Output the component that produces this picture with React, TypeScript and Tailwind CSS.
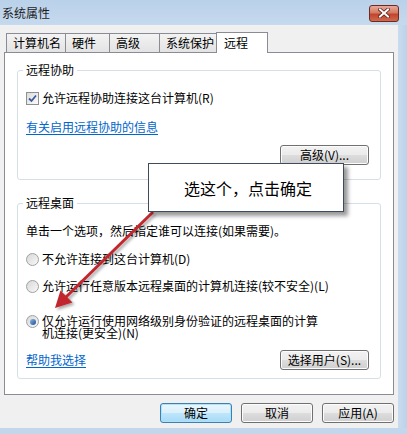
import React from "react";

const font = { fontFamily: '"Noto Sans CJK SC", "Noto Sans", sans-serif' };

function Checkbox() {
  return (
    <span className="flex h-[13px] w-[13px] shrink-0 items-center justify-center border border-[#8e8f8f] bg-gradient-to-br from-[#dcdcdc] to-[#fbfbfb]">
      <svg width="9" height="9" viewBox="0 0 9 9">
        <path d="M1 4.5 L3.5 7 L8 1.5" fill="none" stroke="#3c5a9a" strokeWidth="1.8" />
      </svg>
    </span>
  );
}

function Radio({ checked }: { checked?: boolean }) {
  return (
    <span className="flex h-[13px] w-[13px] shrink-0 items-center justify-center rounded-full border border-[#a0a0a0] bg-gradient-to-br from-[#d8d8d8] to-[#f8f8f8]">
      {checked && (
        <span className="h-[6px] w-[6px] rounded-full bg-gradient-to-br from-[#8fb8e6] to-[#1f4f93]" />
      )}
    </span>
  );
}

function WinButton({
  children,
  w,
  primary,
}: {
  children: React.ReactNode;
  w: string;
  primary?: boolean;
}) {
  return (
    <div
      className={
        "flex h-[20px] items-center justify-center rounded-[3px] border text-[12px] leading-none text-black " +
        w +
        (primary
          ? " border-[#3c7fb1] bg-[linear-gradient(#eaf6fd_0%,#d9f0fc_50%,#bee6fd_51%,#a7d9f5_100%)] shadow-[inset_0_0_0_1px_#aee2fa]"
          : " border-[#707070] bg-[linear-gradient(#f2f2f2_0%,#ebebeb_50%,#dddddd_51%,#cfcfcf_100%)] shadow-[inset_0_0_0_1px_#fcfcfc]")
      }
    >
      {children}
    </div>
  );
}

const tabs = [
  { label: "计算机名", w: "w-[60px]" },
  { label: "硬件", w: "w-[45px]" },
  { label: "高级", w: "w-[51px]" },
  { label: "系统保护", w: "w-[58px]" },
];

export default function App() {
  return (
    <div
      className="relative flex h-[434px] w-[407px] flex-col overflow-hidden bg-[#f0f0f0] text-[12px] text-black"
      style={font}
    >
      {/* title bar */}
      <div className="flex h-[25px] shrink-0 items-center justify-between bg-gradient-to-b from-[#b9d1ea] to-[#c6d9ee] pl-[2px] pr-[8px]">
        <span className="text-[12px] leading-none text-[#1e1e1e]">系统属性</span>
        <div className="mt-[1px] flex h-[17px] w-[30px] items-center justify-center rounded-[3px] border border-[#6d2a1e] bg-[linear-gradient(#e9a99a_0%,#d47a64_45%,#c2442b_55%,#d06a4f_100%)]">
          <svg width="12" height="10" viewBox="0 0 12 10">
            <path d="M2 1.5 L10 8.5 M10 1.5 L2 8.5" stroke="#5a2218" strokeWidth="3.6" strokeLinecap="square" />
            <path d="M2 1.5 L10 8.5 M10 1.5 L2 8.5" stroke="#ffffff" strokeWidth="2" strokeLinecap="square" />
          </svg>
        </div>
      </div>

      <div className="flex flex-1">
        <div className="flex w-[398px] flex-col pl-[4px]">
          {/* tabs */}
          <div className="mt-[7px] flex h-[20px] items-end pl-[2px]">
            {tabs.map((t) => (
              <div
                key={t.label}
                className={
                  "-mr-[1px] flex h-[19px] items-center border border-b-0 border-[#898c95] bg-gradient-to-b from-[#f3f3f3] to-[#e3e3e3] pl-[6px] leading-none " +
                  t.w
                }
              >
                {t.label}
              </div>
            ))}
            <div className="relative z-10 -mb-[1px] flex h-[21px] w-[52px] items-center border border-b-0 border-[#898c95] bg-white pl-[7px] leading-none">
              远程
            </div>
          </div>

          {/* panel */}
          <div className="flex h-[343px] w-[390px] flex-col border border-[#898c95] bg-white px-[12px] pt-[17px]">
            {/* group 1 */}
            <div className="relative rounded-[3px] border border-[#d5dfe5] pb-[14px] pl-[8px] pr-[11px] pt-[19px]">
              <span className="absolute -top-[8px] left-[5px] bg-white px-[3px] leading-[14px]">
                远程协助
              </span>
              <div className="flex h-[16px] items-center gap-[3px]">
                <Checkbox />
                <span className="leading-none">允许远程协助连接这台计算机(R)</span>
              </div>
              <div className="mt-[13px] flex h-[16px] items-center">
                <span className="leading-none text-[#0066cc] underline underline-offset-2">
                  有关启用远程协助的信息
                </span>
              </div>
              <div className="mt-[10px] flex justify-end">
                <WinButton w="w-[89px]">高级(V)...</WinButton>
              </div>
            </div>

            {/* group 2 */}
            <div className="relative mt-[23px] rounded-[3px] border border-[#d5dfe5] pb-[9px] pl-[8px] pr-[11px] pt-[19px]">
              <span className="absolute -top-[8px] left-[5px] bg-white px-[3px] leading-[14px]">
                远程桌面
              </span>
              <div className="flex h-[16px] items-center">
                <span className="leading-none">单击一个选项，然后指定谁可以连接(如果需要)。</span>
              </div>
              <div className="mt-[12px] flex h-[16px] items-center gap-[3px]">
                <Radio />
                <span className="leading-none">不允许连接到这台计算机(D)</span>
              </div>
              <div className="mt-[11px] flex h-[16px] items-center gap-[3px]">
                <Radio />
                <span className="leading-none">允许运行任意版本远程桌面的计算机连接(较不安全)(L)</span>
              </div>
              <div className="mt-[21px] flex items-start gap-[3px]">
                <span className="mt-[0px]">
                  <Radio checked />
                </span>
                <span className="w-[280px] leading-[12px]">
                  仅允许运行使用网络级别身份验证的远程桌面的计算机连接(更安全)(N)
                </span>
              </div>
              <div className="mt-[11px] flex h-[19px] items-center justify-between">
                <span className="leading-none text-[#0066cc] underline underline-offset-2">
                  帮助我选择
                </span>
                <WinButton w="w-[89px]">选择用户(S)...</WinButton>
              </div>
            </div>
          </div>

          {/* dialog buttons */}
          <div className="mt-[8px] flex w-[390px] justify-end gap-[9px]">
            <WinButton w="w-[72px]" primary>
              确定
            </WinButton>
            <WinButton w="w-[72px]">取消</WinButton>
            <WinButton w="w-[72px]">应用(A)</WinButton>
          </div>
        </div>
        <div className="flex-1 bg-gradient-to-r from-[#c9dbee] to-[#bcd2ea]" />
      </div>
      <div className="h-[6px] shrink-0 bg-[#c3d7ec]" />

      {/* red arrow annotation */}
      <svg
        className="pointer-events-none absolute left-0 top-0"
        width="407"
        height="434"
        viewBox="0 0 407 434"
      >
        <defs>
          <filter id="sh" x="-20%" y="-20%" width="140%" height="140%">
            <feDropShadow dx="2" dy="2" stdDeviation="1.5" floodColor="#000" floodOpacity="0.35" />
          </filter>
        </defs>
        <g filter="url(#sh)">
          <line x1="153" y1="212" x2="66" y2="297" stroke="#c1272d" strokeWidth="3" />
          <polygon points="55,308 72.5,302.5 60.5,290.5" fill="#c1272d" />
        </g>
      </svg>

      {/* callout */}
      <div className="absolute left-[148px] top-[163px] flex h-[49px] w-[196px] items-center justify-center border border-[#3e4b5c] bg-white pl-[4px] text-[16px] text-black shadow-[4px_4px_4px_rgba(0,0,0,0.4)]">
        选这个，点击确定
      </div>
    </div>
  );
}
